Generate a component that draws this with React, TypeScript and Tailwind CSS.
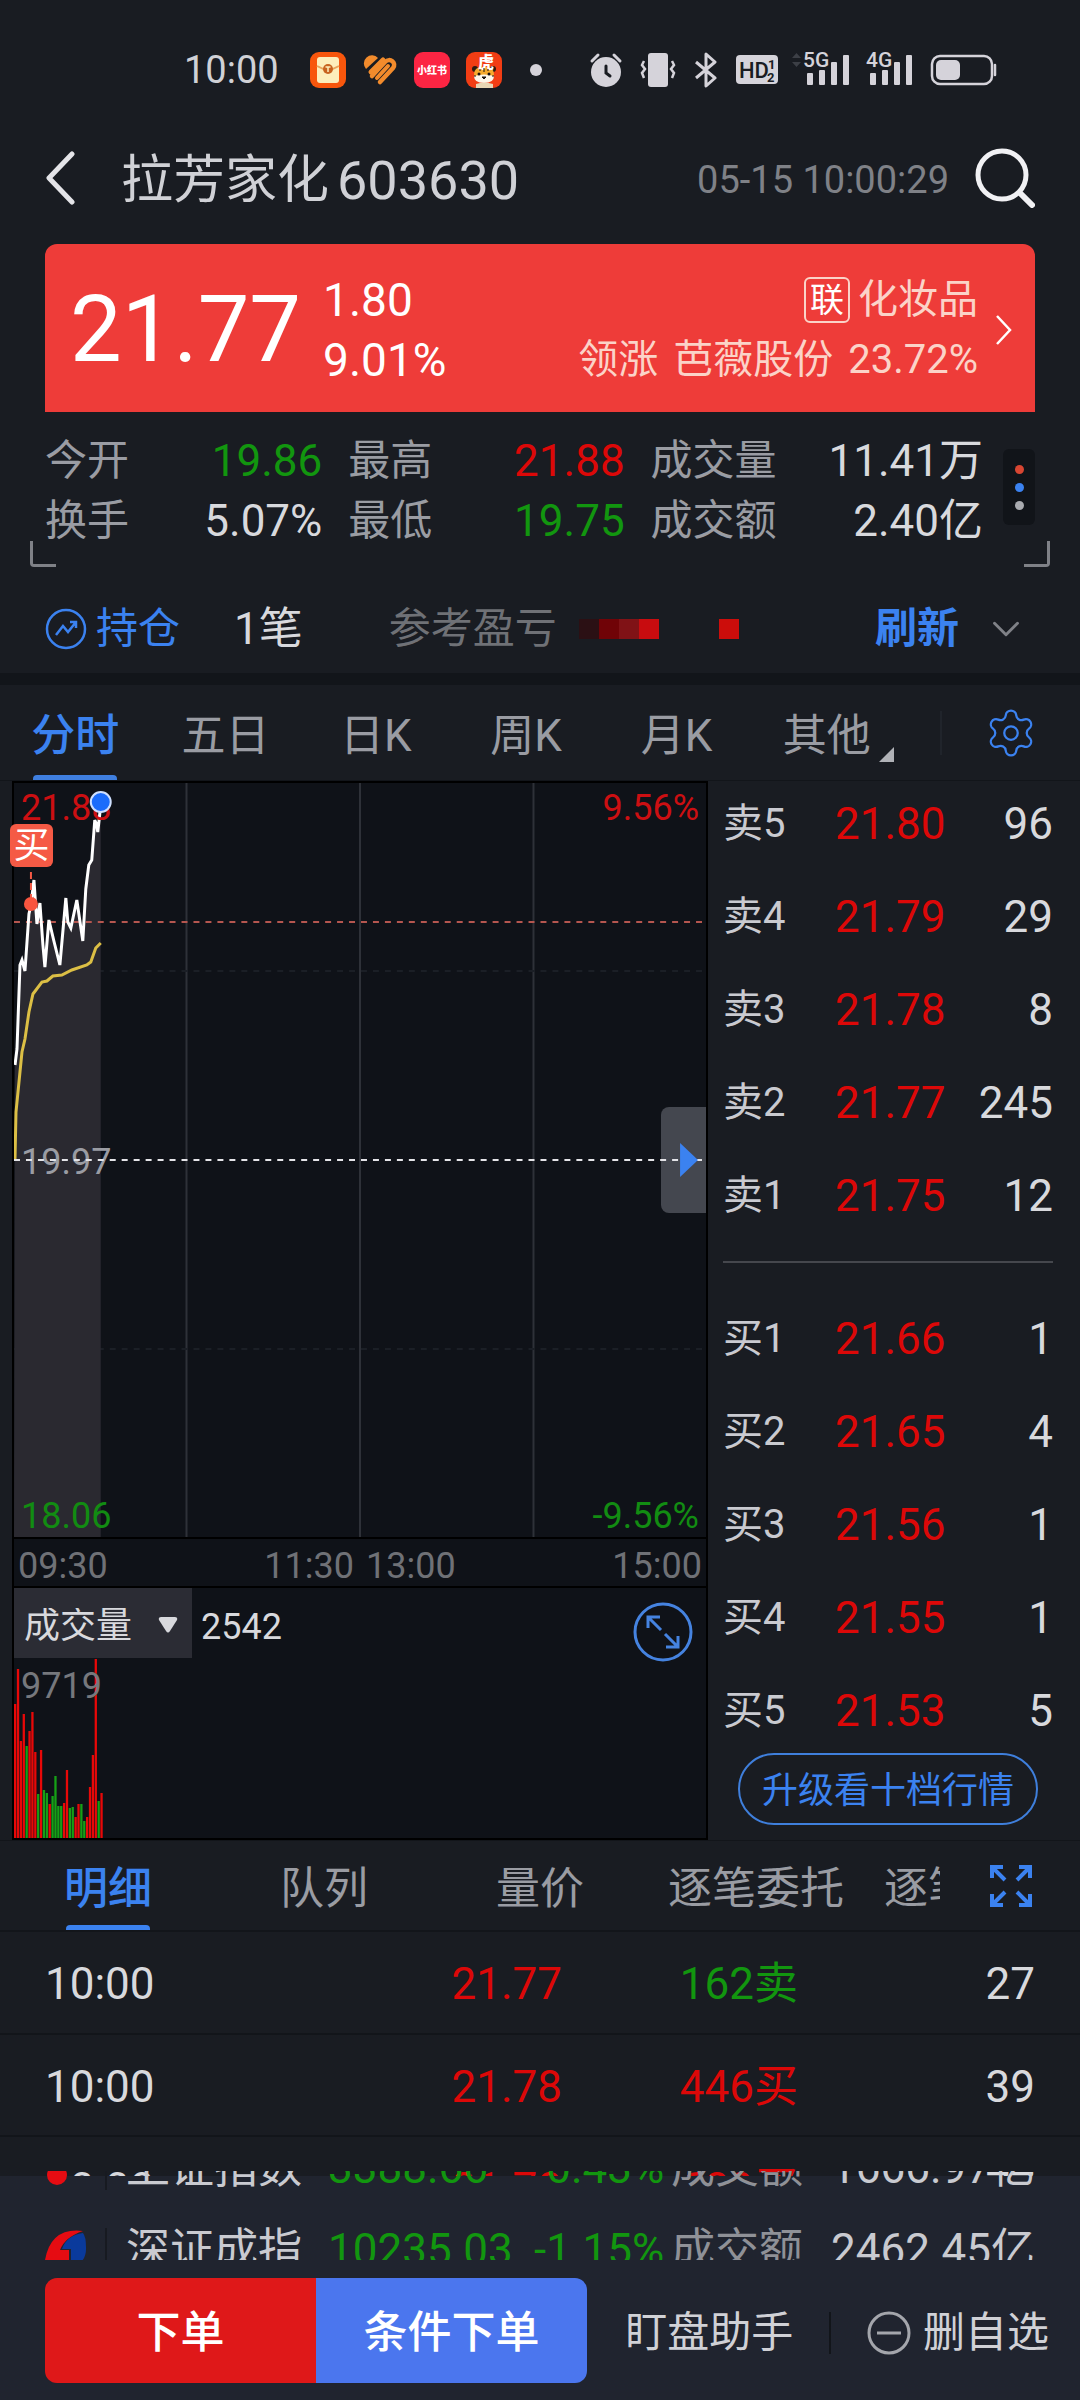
import { useState } from 'react';
import { ChevronDown, Settings } from 'lucide-react';

const stats = [
  { label: '今开', value: '19.86', color: 'text-[#12960f]' },
  { label: '最高', value: '21.88', color: 'text-[#dc0808]' },
  { label: '成交量', value: '11.41万', color: 'text-[#d8d9dd]' },
  { label: '换手', value: '5.07%', color: 'text-[#d8d9dd]' },
  { label: '最低', value: '19.75', color: 'text-[#12960f]' },
  { label: '成交额', value: '2.40亿', color: 'text-[#d8d9dd]' },
];

const periods = ['分时', '五日', '日K', '周K', '月K', '其他'];

const asks = [
  ['卖5', '21.80', '96'],
  ['卖4', '21.79', '29'],
  ['卖3', '21.78', '8'],
  ['卖2', '21.77', '245'],
  ['卖1', '21.75', '12'],
];

const bids = [
  ['买1', '21.66', '1'],
  ['买2', '21.65', '4'],
  ['买3', '21.56', '1'],
  ['买4', '21.55', '1'],
  ['买5', '21.53', '5'],
];

const detailTabs = ['明细', '队列', '量价', '逐笔委托', '逐笔成交'];

const ticks = [
  { time: '10:00', price: '21.77', volume: '162卖', count: '27', color: 'text-[#12960f]' },
  { time: '10:00', price: '21.78', volume: '446买', count: '39', color: 'text-[#dc0808]' },
  { time: '10:00', price: '21.78', volume: '689买', count: '77', color: 'text-[#dc0808]' },
];

const indexes = [
  { name: '上证指数', value: '3388.66', change: '-0.43%', amount: '1666.97亿' },
  { name: '深证成指', value: '10235.03', change: '-1.15%', amount: '2462.45亿' },
];

// one bar per minute: height and direction
const volumes: [number, 'up' | 'down'][] = [
  [134, 'up'], [169, 'up'], [97, 'up'], [124, 'up'], [92, 'down'], [107, 'up'], [126, 'up'], [86, 'up'],
  [44, 'down'], [88, 'up'], [48, 'down'], [45, 'down'], [34, 'up'], [42, 'down'], [62, 'down'], [32, 'down'],
  [32, 'down'], [35, 'up'], [68, 'up'], [30, 'down'], [31, 'down'], [21, 'up'], [34, 'up'], [34, 'down'],
  [17, 'down'], [21, 'up'], [51, 'up'], [83, 'up'], [179, 'up'], [37, 'down'], [45, 'up'],
];

const priceLine =
  '1,282 3,266 6,182 8,177 11,188 15,131 17,122 20,97 23,141 26,120 29,162 31,184 35,137 40,158 46,182 52,115 54,139 57,145 63,117 69,158 72,106 75,82 78,77 81,37 83,42 84,49 86,31 87,22';
const avgLine =
  '1,376 2,329 6,289 8,269 11,256 15,229 19,211 28,199 33,198 39,193 48,192 58,187 73,182 77,179 82,165 87,160';

const SignalIcon = ({ label }: { label: string }) => (
  <svg width="46" height="36" viewBox="0 0 46 36" fill="#d5d3da" className="overflow-visible">
    <text x="-2" y="15" fontSize="21" fontWeight="500" fontFamily="Roboto, sans-serif">{label}</text>
    <rect x="2" y="21" width="6" height="12" rx="1" />
    <rect x="14" y="18" width="6" height="15" rx="1" />
    <rect x="26" y="10" width="6" height="23" rx="1" />
    <rect x="38" y="3" width="6" height="30" rx="1" />
  </svg>
);

const StatusBar = () => (
  <div className="flex h-[44px] items-center pr-[82px] pl-[184px]">
    <span className="text-[38px] leading-none text-[#d0d1d6]">10:00</span>
    <div className="ml-[31px] flex items-center gap-[16px]">
      <svg width="36" height="36" viewBox="0 0 36 36">
        <rect width="36" height="36" rx="9" fill="#f8560c" />
        <rect x="7" y="5" width="22" height="26" rx="3" fill="#fdeebb" />
        <path d="M7 14 Q18 21 29 14" stroke="#e9a45c" strokeWidth="2" fill="none" />
        <circle cx="18" cy="17" r="5" fill="#c8631f" />
        <path d="M15.500 15 H20.500 M18 15 V20" stroke="#fdeebb" strokeWidth="1.500" />
      </svg>
      <svg width="36" height="36" viewBox="0 0 36 36" fill="none" stroke="#f28b2c" strokeWidth="5" strokeLinecap="round">
        <path d="M4 17 A7 7 0 0 1 16 6 Z" fill="#f28b2c" stroke="none" />
        <path d="M9 20 L21 8" />
        <path d="M10 24 L23 10 C28 5 35 11 31 16 L18 30" strokeWidth="4.500" />
        <path d="M15 26 L26 14" strokeWidth="4" />
      </svg>
      <svg width="36" height="36" viewBox="0 0 36 36">
        <rect width="36" height="36" rx="9" fill="#fc2543" />
        <text x="18" y="22" textAnchor="middle" fontSize="10" fontWeight="900" fill="#fff" fontFamily="Noto Sans CJK SC, sans-serif">小红书</text>
      </svg>
      <svg width="36" height="36" viewBox="0 0 36 36">
        <rect width="36" height="36" rx="9" fill="#f23d14" />
        <circle cx="9" cy="17" r="3" fill="#2a1a12" />
        <circle cx="27" cy="17" r="3" fill="#2a1a12" />
        <rect x="8" y="15" width="20" height="14" rx="7" fill="#f6a92c" />
        <path d="M8 24 Q18 21 28 24 Q28 31 18 31 Q8 31 8 24" fill="#fdf6ea" />
        <path d="M10 32 Q18 29 27 32 V36 H10Z" fill="#e8d6b4" />
        <text x="20" y="16" textAnchor="middle" fontSize="16" fontWeight="900" fill="#fff" fontFamily="Noto Sans CJK SC, sans-serif">虎</text>
        <circle cx="13" cy="22" r="1.500" fill="#1c120d" />
        <circle cx="23" cy="22" r="1.500" fill="#1c120d" />
        <path d="M16 25 h4 l-2 2z M18 16 v4 M14 17 v2 M22 17 v2 M10 24 h-2 M26 24 h2" fill="#1c120d" stroke="#1c120d" />
      </svg>
      <span className="ml-[12px] size-[12px] rounded-full bg-[#d5d3da]" />
    </div>
    <div className="ml-auto flex items-center">
      <svg width="34" height="36" viewBox="0 0 34 36">
        <circle cx="17" cy="20" r="15" fill="#d5d3da" />
        <path d="M3 9 L9 3 M31 9 L25 3" stroke="#d5d3da" strokeWidth="3" strokeLinecap="round" />
        <path d="M17 14 V21 L21 24" stroke="#191c22" strokeWidth="3" fill="none" strokeLinecap="round" />
      </svg>
      <svg className="ml-[17px]" width="36" height="36" viewBox="0 0 36 36">
        <rect x="8" y="1" width="20" height="34" rx="3" fill="#d5d3da" />
        <path d="M4 9 L2 13 L5 17 L2 21 L4 26 M32 9 L34 13 L31 17 L34 21 L32 26" stroke="#d5d3da" strokeWidth="2.500" fill="none" />
      </svg>
      <svg className="ml-[18px]" width="24" height="36" viewBox="0 0 24 36">
        <path d="M2 10 L21 26 L12 34 V2 L21 10 L2 26" stroke="#d5d3da" strokeWidth="3" fill="none" strokeLinejoin="round" />
      </svg>
      <svg className="ml-[18px]" width="42" height="30" viewBox="0 0 42 30">
        <rect width="42" height="29" rx="4" fill="#d5d3da" />
        <text x="3" y="23" fontSize="22" fontWeight="500" fontFamily="Roboto, sans-serif" fill="#191c22">HD</text>
        <text x="32" y="14" fontSize="13" fontWeight="700" fontFamily="Roboto, sans-serif" fill="#191c22">1</text>
        <text x="31" y="27" fontSize="13" fontWeight="700" fontFamily="Roboto, sans-serif" fill="#191c22">2</text>
      </svg>
      <svg className="mr-[4px] ml-[14px] -mt-[20px]" width="9" height="14" viewBox="0 0 9 14" fill="#3c3f46">
        <path d="M4.500 0 L9 5 H0Z M4.500 14 L9 9 H0Z" />
      </svg>
      <SignalIcon label="5G" />
      <span className="w-[17px]" />
      <SignalIcon label="4G" />
      <svg className="ml-[16px]" width="68" height="32" viewBox="0 0 68 32">
        <rect x="2" y="2" width="60" height="28" rx="8" fill="none" stroke="#d5d3da" strokeWidth="2.500" />
        <rect x="6" y="6" width="24" height="20" rx="5" fill="#d5d3da" />
        <path d="M65 11 V21" stroke="#d5d3da" strokeWidth="2.500" strokeLinecap="round" />
      </svg>
    </div>
  </div>
);

const Header = () => (
  <header className="mt-[46px] flex h-[80px] items-center px-[45px]">
    <button aria-label="返回">
      <svg width="30" height="54" viewBox="0 0 30 54" fill="none" stroke="#e4e4e8" strokeWidth="5" strokeLinecap="round" strokeLinejoin="round">
        <path d="M27 3 L4 27 L27 51" />
      </svg>
    </button>
    <h1 className="ml-[46px] flex items-center gap-[8px] pt-[6px] text-[#d0d1d6]">
      <span className="text-[52px] leading-none">拉芳家化</span>
      <span className="text-[54px] leading-none">603630</span>
    </h1>
    <time className="ml-auto pt-[4px] text-[38px] leading-none text-[#7f8187]">05-15 10:00:29</time>
    <button aria-label="搜索" className="ml-[26px]">
      <svg width="60" height="60" viewBox="0 0 60 60" fill="none" stroke="#f1f1f4" strokeWidth="5" strokeLinecap="round">
        <circle cx="27" cy="27" r="24" />
        <path d="M46 46 L57 57" strokeWidth="6" />
      </svg>
    </button>
  </header>
);

const PriceCard = () => (
  <section className="mx-[45px] mt-[26px] flex h-[168px] items-center rounded-t-xl bg-[#ee3c39] pt-[4px] pr-[23px] pl-[25px] text-white">
    <div className="text-[92px] leading-none">21.77</div>
    <div className="ml-[22px] text-[46px] leading-[60px]">
      <div>1.80</div>
      <div>9.01%</div>
    </div>
    <a href="#sector" className="ml-auto flex items-center gap-[18px]">
      <span className="flex flex-col text-[40px] leading-[60px] text-[#fbd3c8]">
        <span className="flex items-center justify-end gap-[8px]">
          <span className="flex size-[46px] items-center justify-center rounded-md border-2 border-[#fbd3c8] text-[34px] leading-none text-white">联</span>
          化妆品
        </span>
        <span className="flex justify-end gap-[15px]">
          <span>领涨</span>
          <span>芭薇股份</span>
          <span>23.72%</span>
        </span>
      </span>
      <svg width="16" height="32" viewBox="0 0 16 32" fill="none" stroke="#fff" strokeWidth="2.500">
        <path d="M1 2 L14 16 L1 30" />
      </svg>
    </a>
  </section>
);

const Stats = () => (
  <section className="relative flex items-start px-[45px] pt-[19px] pb-[16px]">
    <dl className="grid flex-1 grid-cols-[277fr_276fr_332fr] gap-x-[26px]">
      {stats.map((s) => (
        <div key={s.label} className="flex h-[60px] items-center justify-between">
          <dt className="text-[42px] leading-none text-[#9a9ca3]">{s.label}</dt>
          <dd className={`text-[44px] leading-none ${s.color}`}>{s.value}</dd>
        </div>
      ))}
    </dl>
    <button aria-label="更多" className="mt-[18px] ml-[20px] flex h-[76px] w-[32px] flex-col items-center justify-center gap-[9px] rounded-md bg-[#111419]">
      <span className="size-[9px] rounded-full bg-[#d84632]" />
      <span className="size-[9px] rounded-full bg-[#3b82f0]" />
      <span className="size-[9px] rounded-full bg-[#a9abb0]" />
    </button>
    {/* corner marks */}
    <span className="absolute bottom-0 left-[30px] size-[26px] rounded-bl-sm border-b-3 border-l-3 border-[#7f8187]" />
    <span className="absolute right-[30px] bottom-0 size-[26px] rounded-br-sm border-r-3 border-b-3 border-[#7f8187]" />
  </section>
);

const Position = () => (
  <section className="flex h-[106px] items-center pt-[18px] pr-[51px] pl-[45px] text-[42px] leading-none">
    <a href="#position" className="flex items-center gap-[9px] text-[#3b82f0]">
      <svg width="42" height="42" viewBox="0 0 42 42" fill="none" stroke="#3b82f0" strokeWidth="2.500">
        <circle cx="21" cy="21" r="19" />
        <path d="M11 27 L18 18 L23 24 L31 14 M25 14 H31 V20" />
      </svg>
      持仓
    </a>
    <span className="ml-[54px] text-[44px] text-[#d8d9dd]">1笔</span>
    <span className="ml-[86px] text-[#6f7176]">参考盈亏</span>
    <span className="ml-[22px] flex h-[20px]">
      <span className="w-[20px] bg-[#2b1014]" />
      <span className="w-[20px] bg-[#700307]" />
      <span className="w-[20px] bg-[#801216]" />
      <span className="w-[20px] bg-[#c80c0f]" />
      <span className="ml-[60px] w-[20px] bg-[#cc0d0b]" />
    </span>
    <button className="ml-auto font-bold text-[#3b82f0]">刷新</button>
    <button aria-label="展开" className="ml-[24px]">
      <ChevronDown size={46} strokeWidth={1.5} color="#7f8187" />
    </button>
  </section>
);

const PeriodTabs = () => {
  const [active, setActive] = useState('分时');
  return (
    <nav className="flex h-[95px]">
      <div className="flex flex-1">
        {periods.map((p) => (
          <button
            key={p}
            onClick={() => setActive(p)}
            className={`relative flex flex-1 items-center justify-center pt-[6px] text-[44px] leading-none ${
              p === active ? 'font-medium text-[#3b82f0]' : 'text-[#9a9ca3]'
            }`}
          >
            {p}
            {p === active && <span className="absolute bottom-0 h-[5px] w-[84px] rounded-t-sm bg-[#3f7fe0]" />}
            {p === '其他' && (
              <svg className="absolute right-[8px] bottom-[18px]" width="15" height="15" viewBox="0 0 15 15" fill="#b0b2b7">
                <path d="M15 0 V15 H0Z" />
              </svg>
            )}
          </button>
        ))}
      </div>
      <div className="flex w-[178px] items-center justify-between pr-[42px] pl-[38px]">
        <span className="h-[44px] w-[2px] bg-[#20242b]" />
        <button aria-label="设置">
          <Settings size={54} strokeWidth={1} color="#3b82f0" />
        </button>
      </div>
    </nav>
  );
};

const MinuteChart = () => (
  <div className="relative h-[754px]">
    <svg className="size-full" viewBox="0 0 694 754" preserveAspectRatio="none" fill="none">
      <path d="M173 0 V754 M347 0 V754 M521 0 V754" stroke="#2e3138" strokeWidth="2" />
      <path d="M0 188 H694 M0 566 H694" stroke="#1b1f26" strokeWidth="2" strokeDasharray="6 6" />
      <polygon points={`${priceLine} 87,754 0,754`} fill="#2a2930" />
      <path d="M0 139 H692" stroke="#b5564f" strokeWidth="2" strokeDasharray="6 6" />
      <polyline points={priceLine} stroke="#fff" strokeWidth="3" />
      <polyline points={avgLine} stroke="#dcbf45" strokeWidth="3" />
    </svg>
    <div className="absolute inset-0 flex flex-col justify-between px-[7px] pt-[4px] text-[36px] leading-[42px]">
      <div className="flex justify-between text-[#cc0f12]">
        <span>21.88</span>
        <span>9.56%</span>
      </div>
      <div className="text-[#9a9ca3]">19.97</div>
      <div className="flex justify-between text-[#128c12]">
        <span>18.06</span>
        <span>-9.56%</span>
      </div>
    </div>
    <button aria-label="收起盘口" className="absolute top-[324px] right-0 h-[106px] w-[45px] rounded-l-lg bg-[#44474f]" />
    {/* markers over the curve */}
    <svg className="pointer-events-none absolute inset-0 size-full overflow-visible" viewBox="0 0 694 754" preserveAspectRatio="none" fill="none">
      <path d="M0 377 H692" stroke="#e4e4e8" strokeWidth="2" strokeDasharray="6 6" />
      <path d="M668 360 L686 377 L668 394Z" fill="#3b82f0" />
      <path d="M17 89 V115" stroke="#f55a45" strokeWidth="2" strokeDasharray="7 4" />
      <circle cx="17" cy="121" r="7" fill="#f8553f" />
      <circle cx="87" cy="19" r="10" fill="#1b6cfb" stroke="#cfe0ff" strokeWidth="2" />
    </svg>
    <span className="absolute top-[41px] -left-[4px] flex size-[43px] items-center justify-center rounded-md bg-[#f55a45] text-[36px] leading-none text-white">买</span>
  </div>
);

const VolumeChart = () => (
  <div className="relative h-[250px]">
    <svg className="absolute bottom-0 left-0" width="90" height="180" viewBox="0 0 90 180">
      {volumes.map(([h, dir], i) => (
        <rect key={i} x={i * 2.88} y={180 - h} width="2.300" height={h} fill={dir === 'up' ? '#e80808' : '#16a016'} />
      ))}
    </svg>
    <div className="relative flex items-start text-[36px]">
      <div className="relative w-[178px]">
        <select aria-label="指标" className="h-[70px] w-full appearance-none bg-[#2b2c34] pt-[5px] pl-[10px] leading-none text-[#d8d9dd]">
          <option>成交量</option>
          <option>成交额</option>
        </select>
        <svg className="pointer-events-none absolute top-[29px] right-[14px]" width="20" height="16" viewBox="0 0 20 16" fill="#d8d9dd">
          <path d="M3 0 H17 Q20 0 19 3 L12 14 Q10 17 8 14 L1 3 Q0 0 3 0" />
        </svg>
      </div>
      <span className="ml-[9px] leading-[78px] text-[#d8d9dd]">2542</span>
      <button aria-label="放大" className="mt-[14px] mr-[13px] ml-auto">
        <svg width="60" height="60" viewBox="0 0 60 60" fill="none" stroke="#4583e0" strokeWidth="3">
          <circle cx="30" cy="30" r="28" />
          <path d="M28 28 L15 15 M15 26 V15 H27 M32 32 L45 45 M45 34 V45 H33" />
        </svg>
      </button>
    </div>
    <div className="relative px-[7px] text-[36px] leading-[40px] text-[#76787d]">9719</div>
  </div>
);

const BookRows = ({ rows }: { rows: string[][] }) => (
  <div className="flex flex-col gap-[33px]">
    {rows.map(([label, price, qty]) => (
      <div key={label} className="flex h-[60px] items-center leading-none">
        <span className="w-[112px] text-[40px] text-[#c9cad0]">{label}</span>
        <span className="text-[44px] text-[#dc0808]">{price}</span>
        <span className="ml-auto text-[44px] text-[#d8d9dd]">{qty}</span>
      </div>
    ))}
  </div>
);

const DetailTabs = () => {
  const [active, setActive] = useState('明细');
  return (
    <nav className="flex h-[91px] items-stretch border-b-2 border-[#12151a]">
      <div className="flex flex-1 overflow-hidden">
        {detailTabs.map((t) => (
          <button
            key={t}
            onClick={() => setActive(t)}
            className={`relative flex min-w-[216px] shrink-0 items-center justify-center px-[18px] pt-[6px] text-[44px] leading-none ${
              t === active ? 'font-medium text-[#3b82f0]' : 'text-[#9a9ca3]'
            }`}
          >
            {t}
            {t === active && <span className="absolute bottom-0 h-[5px] w-[84px] rounded-t-sm bg-[#3b82f0]" />}
          </button>
        ))}
      </div>
      <button aria-label="全屏" className="mr-[46px] ml-[48px]">
        <svg width="46" height="46" viewBox="0 0 46 46" fill="none" stroke="#3b82f0" strokeWidth="4">
          <path d="M17 17 L4 4 M4 15 V4 H15 M29 17 L42 4 M31 4 H42 V15 M17 29 L4 42 M4 31 V42 H15 M29 29 L42 42 M42 31 V42 H31" />
        </svg>
      </button>
    </nav>
  );
};

const ShanghaiLogo = () => (
  <svg width="42" height="42" viewBox="0 0 42 42">
    <circle cx="12" cy="28" r="10" fill="#e60c12" />
    <path d="M12 2 Q26 2 22 20 Q18 14 8 16 Q4 8 12 2" fill="#0a3a9c" />
  </svg>
);

const ShenzhenLogo = () => (
  <svg width="42" height="42" viewBox="0 0 42 42">
    <path d="M38 2 Q6 -2 0 31 H24 V21 H15 Q20 8 38 2" fill="#e60c12" />
    <path d="M38 4 Q22 6 17 20 H26 V34 L24 41 Q42 34 41 18 Q41 8 38 4" fill="#0a3a9c" />
  </svg>
);

const Footer = () => (
  <footer className="relative flow-root bg-[#20242f] pb-[18px]">
    <div className="relative -mt-[5px] h-[89px] overflow-hidden">
      <div className="-mt-[44px]">
        {indexes.map((row, i) => (
          <div key={row.name} className="flex h-[82px] items-center px-[45px] text-[44px] leading-none text-[#c9cad0]">
            {i === 0 ? <ShanghaiLogo /> : <ShenzhenLogo />}
            <span className="ml-[18px] h-[44px] w-[2px] bg-[#171a21]" />
            <span className="ml-[19px]">{row.name}</span>
            <span className="ml-[26px] w-[206px] text-[#12960f]">{row.value}</span>
            <span className="w-[137px] text-[#12960f]">{row.change}</span>
            <span className="text-[#8f9197]">成交额</span>
            <span className="ml-auto">{row.amount}</span>
          </div>
        ))}
      </div>
    </div>
    <div className="mt-[18px] flex h-[105px] items-center pr-[31px] pl-[45px] leading-none">
      <div className="flex h-full w-[54%] overflow-hidden rounded-xl text-[44px] font-medium text-white">
        <button className="w-1/2 bg-[#df1819] pt-[4px]">下单</button>
        <button className="w-1/2 bg-[#4b76ee] pt-[4px]">条件下单</button>
      </div>
      <div className="ml-[38px] flex flex-1 items-center justify-between pt-[4px] text-[42px] text-[#d0d1d6]">
        <button>盯盘助手</button>
        <span className="h-[42px] w-[2px] bg-[#12151a]" />
        <button className="flex items-center gap-[12px]">
          <svg width="44" height="44" viewBox="0 0 44 44" fill="none" stroke="#a4a6ac" strokeWidth="3">
            <circle cx="22" cy="22" r="20" />
            <path d="M10 22 H34" />
          </svg>
          删自选
        </button>
      </div>
    </div>
  </footer>
);

export default function App() {
  return (
    <div className="min-h-screen w-full bg-[#191c22] pt-[48px] font-['Roboto','Noto_Sans_CJK_SC',sans-serif]">
      <StatusBar />
      <Header />
      <PriceCard />
      <Stats />
      <Position />
      <div className="h-[12px] bg-[#12151a]" />
      <PeriodTabs />

      <main className="flex border-y border-[#12151a] pl-[12px]">
        <div className="min-w-0 flex-1 border-2 border-black bg-[#0f1218]">
          <MinuteChart />
          <div className="grid h-[51px] grid-cols-2 gap-[12px] border-y-2 border-black px-[4px] pt-[4px] text-[36px] leading-[46px] text-[#6f7176]">
            <div className="flex justify-between">
              <span>09:30</span>
              <span>11:30</span>
            </div>
            <div className="flex justify-between">
              <span>13:00</span>
              <span>15:00</span>
            </div>
          </div>
          <VolumeChart />
        </div>
        <div className="w-[372px] pt-[13px] pr-[27px] pl-[15px]">
          <BookRows rows={asks} />
          <div className="mt-[35px] mb-[46px] h-[2px] bg-[#45474d]" />
          <BookRows rows={bids} />
          <button className="mx-[15px] mt-[12px] flex h-[72px] w-[300px] items-center justify-center rounded-full border-2 border-[#3f7fdc] pt-[3px] text-[36px] leading-none text-[#3b82f0]">
            升级看十档行情
          </button>
        </div>
      </main>

      <DetailTabs />
      <div className="h-[244px] overflow-hidden">
        <table className="w-full table-fixed text-[44px] leading-none text-[#d8d9dd]">
          <tbody>
            {ticks.map((t, i) => (
              <tr key={i} className="h-[102px] border-b-2 border-[#12151a]">
                <td className="pt-[3px] pl-[45px]">{t.time}</td>
                <td className="pt-[3px] text-right text-[#dc0808]">
                  <span className="mr-[-22px]">{t.price}</span>
                </td>
                <td className={`pt-[3px] text-right ${t.color}`}>
                  <span className="mr-[12px]">{t.volume}</span>
                </td>
                <td className="pt-[3px] pr-[45px] text-right">{t.count}</td>
              </tr>
            ))}
          </tbody>
        </table>
      </div>
      <Footer />
    </div>
  );
}
